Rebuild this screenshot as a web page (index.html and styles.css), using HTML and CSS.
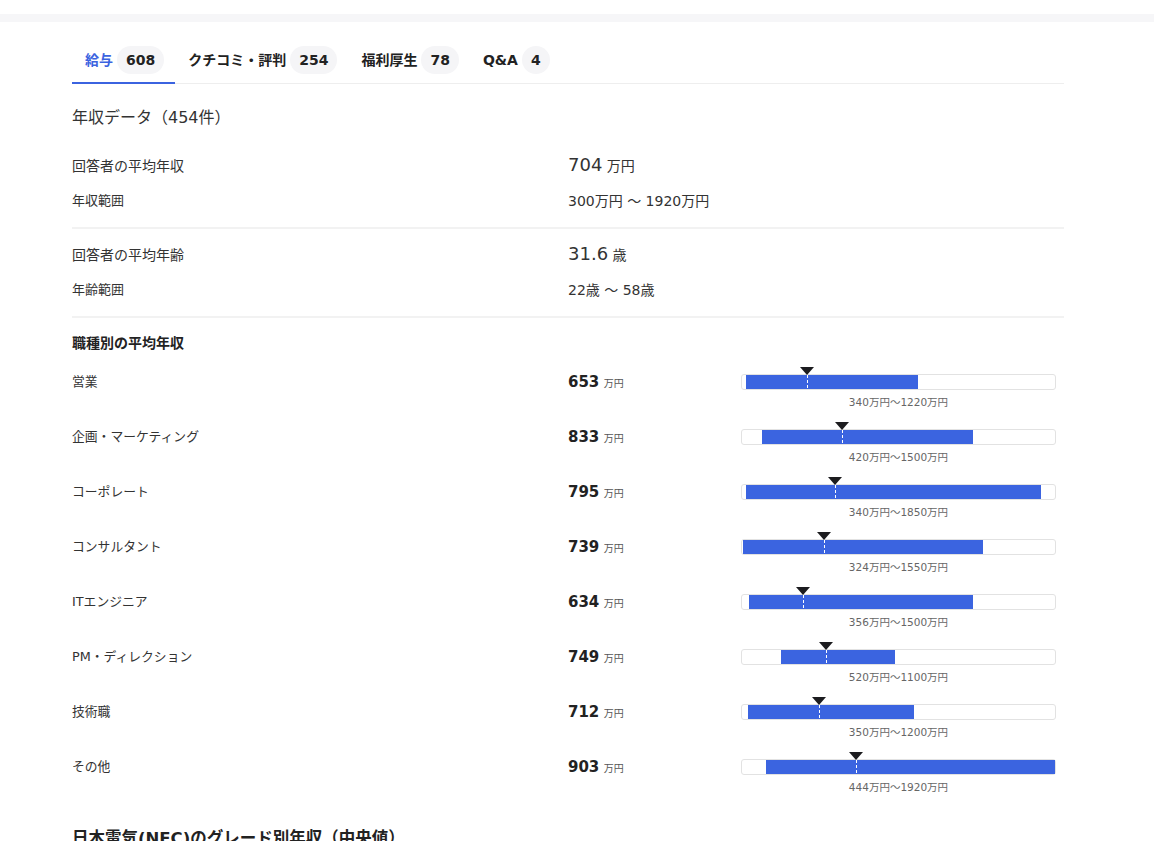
FILE: index.html
```html
<!DOCTYPE html>
<html lang="ja">
<head>
<meta charset="utf-8">
<title>年収データ</title>
<link rel="stylesheet" href="styles.css">
</head>
<body>
<div class="topband"></div>
<main class="content">
  <nav class="tabs">
    <a class="tab active"><span class="tab-label">給与</span><span class="badge">608</span></a>
    <a class="tab"><span class="tab-label">クチコミ・評判</span><span class="badge">254</span></a>
    <a class="tab"><span class="tab-label">福利厚生</span><span class="badge">78</span></a>
    <a class="tab"><span class="tab-label">Q&amp;A</span><span class="badge">4</span></a>
  </nav>

  <h2 class="section-title">年収データ（454件）</h2>

  <div class="stat-block first">
    <div class="stat-row main"><span class="stat-label">回答者の平均年収</span><span class="stat-value"><span class="num">704</span> <span class="unit">万円</span></span></div>
    <div class="stat-row sub"><span class="stat-label">年収範囲</span><span class="stat-value">300万円 〜 1920万円</span></div>
  </div>
  <div class="stat-block">
    <div class="stat-row main"><span class="stat-label">回答者の平均年齢</span><span class="stat-value"><span class="num">31.6</span> <span class="unit">歳</span></span></div>
    <div class="stat-row sub"><span class="stat-label">年齢範囲</span><span class="stat-value">22歳 〜 58歳</span></div>
  </div>

  <section class="jobs">
    <h3 class="jobs-title">職種別の平均年収</h3>

    <div class="job-row">
      <span class="job-label">営業</span>
      <span class="job-value"><b>653</b> <small>万円</small></span>
      <div class="job-chart">
        <div class="bar"><div class="fill" style="left:1.25%;width:55%"></div><div class="marker" style="left:20.8125%"></div></div>
        <div class="range">340万円〜1220万円</div>
      </div>
    </div>

    <div class="job-row">
      <span class="job-label">企画・マーケティング</span>
      <span class="job-value"><b>833</b> <small>万円</small></span>
      <div class="job-chart">
        <div class="bar"><div class="fill" style="left:6.25%;width:67.5%"></div><div class="marker" style="left:32.0625%"></div></div>
        <div class="range">420万円〜1500万円</div>
      </div>
    </div>

    <div class="job-row">
      <span class="job-label">コーポレート</span>
      <span class="job-value"><b>795</b> <small>万円</small></span>
      <div class="job-chart">
        <div class="bar"><div class="fill" style="left:1.25%;width:94.375%"></div><div class="marker" style="left:29.6875%"></div></div>
        <div class="range">340万円〜1850万円</div>
      </div>
    </div>

    <div class="job-row">
      <span class="job-label">コンサルタント</span>
      <span class="job-value"><b>739</b> <small>万円</small></span>
      <div class="job-chart">
        <div class="bar"><div class="fill" style="left:0.25%;width:76.625%"></div><div class="marker" style="left:26.1875%"></div></div>
        <div class="range">324万円〜1550万円</div>
      </div>
    </div>

    <div class="job-row">
      <span class="job-label">ITエンジニア</span>
      <span class="job-value"><b>634</b> <small>万円</small></span>
      <div class="job-chart">
        <div class="bar"><div class="fill" style="left:2.25%;width:71.5%"></div><div class="marker" style="left:19.625%"></div></div>
        <div class="range">356万円〜1500万円</div>
      </div>
    </div>

    <div class="job-row">
      <span class="job-label">PM・ディレクション</span>
      <span class="job-value"><b>749</b> <small>万円</small></span>
      <div class="job-chart">
        <div class="bar"><div class="fill" style="left:12.5%;width:36.25%"></div><div class="marker" style="left:26.8125%"></div></div>
        <div class="range">520万円〜1100万円</div>
      </div>
    </div>

    <div class="job-row">
      <span class="job-label">技術職</span>
      <span class="job-value"><b>712</b> <small>万円</small></span>
      <div class="job-chart">
        <div class="bar"><div class="fill" style="left:1.875%;width:53.125%"></div><div class="marker" style="left:24.5%"></div></div>
        <div class="range">350万円〜1200万円</div>
      </div>
    </div>

    <div class="job-row">
      <span class="job-label">その他</span>
      <span class="job-value"><b>903</b> <small>万円</small></span>
      <div class="job-chart">
        <div class="bar"><div class="fill" style="left:7.75%;width:92.25%"></div><div class="marker" style="left:36.4375%"></div></div>
        <div class="range">444万円〜1920万円</div>
      </div>
    </div>
  </section>

  <h2 class="grade-title">日本電気(NEC)のグレード別年収（中央値）</h2>
</main>
</body>
</html>
```

FILE: styles.css
```css
* { box-sizing: border-box; }

html, body {
  margin: 0;
  padding: 0;
  background: #fff;
  height: 841px;
  overflow: hidden;
}

body {
  font-family: "DejaVu Sans", "Noto Sans CJK JP", sans-serif;
  color: #333;
  font-size: 14px;
  line-height: 20px;
}

.topband {
  margin-top: 14px;
  height: 8px;
  background: #f6f6f8;
}

.content {
  width: 992px;
  margin-left: 72px;
}

/* Tabs */
.tabs {
  display: flex;
  padding-top: 24px;
  border-bottom: 1px solid #eeeeee;
}

.tab {
  display: flex;
  align-items: center;
  gap: 4px;
  padding: 0 11px 8px 13px;
  border-bottom: 2px solid transparent;
  margin-bottom: -1px;
  font-size: 14px;
  line-height: 20px;
  font-weight: 700;
  color: #222;
  text-decoration: none;
}

.tab.active {
  border-bottom-color: #3b63e0;
}

.tab.active .tab-label {
  color: #3b63e0;
}

.badge {
  display: inline-flex;
  align-items: center;
  justify-content: center;
  height: 28px;
  min-width: 26px;
  padding: 0 9px;
  border-radius: 14px;
  background: #f5f5f7;
  color: #222;
  font-weight: 700;
  font-size: 14px;
}

/* Summary */
.section-title {
  margin: 22px 0 0;
  font-size: 16px;
  line-height: 24px;
  font-weight: 400;
  color: #333;
}

.stat-block {
  display: flex;
  flex-direction: column;
  gap: 16px;
  padding: 15px 0 16px;
  border-bottom: 2px solid #f2f2f2;
}

.stat-block.first {
  padding-top: 25px;
}

.stat-row {
  display: grid;
  grid-template-columns: 496px 1fr;
  align-items: center;
  height: 20px;
  line-height: 20px;
}

.stat-row.main .stat-label {
  font-size: 14px;
}

.stat-row.sub .stat-label {
  font-size: 13px;
}

.stat-row.sub .stat-value {
  font-size: 14px;
}

.stat-value .num {
  font-size: 18px;
}

.stat-value .unit {
  font-size: 14px;
}

/* Job breakdown */
.jobs {
  display: flex;
  flex-direction: column;
  gap: 20px;
  padding-top: 15px;
}

.jobs-title {
  margin: 0 0 1px;
  font-size: 14px;
  line-height: 20px;
  font-weight: 700;
  color: #222;
}

.job-row {
  display: grid;
  grid-template-columns: 496px 173px 315px;
  align-items: start;
  height: 35px;
  line-height: 16px;
}

.job-label {
  font-size: 12.8px;
  line-height: 16px;
  color: #333;
}

.job-value {
  line-height: 16px;
  color: #222;
}

.job-value b {
  font-size: 15px;
  font-weight: 700;
}

.job-value small {
  font-size: 10px;
  color: #555;
}

.bar {
  position: relative;
  height: 16px;
  border: 1px solid #e2e2e2;
  border-radius: 3px;
  background: #fff;
}

.fill {
  position: absolute;
  top: 0;
  bottom: 0;
  background: #3b64e0;
}

.marker {
  position: absolute;
  top: 0;
  bottom: 0;
  width: 1px;
  background: repeating-linear-gradient(to bottom, #ffffff 0 3px, transparent 3px 5px);
}

.marker::before {
  content: "";
  position: absolute;
  top: -8px;
  left: -7px;
  border-left: 7.5px solid transparent;
  border-right: 7.5px solid transparent;
  border-top: 8px solid #1c1c1f;
}

.range {
  height: 14px;
  margin-top: 5px;
  text-align: center;
  font-size: 10.5px;
  line-height: 14px;
  color: #666;
}

.grade-title {
  margin: 33px 0 0;
  font-size: 16.5px;
  line-height: 24px;
  font-weight: 700;
  color: #222;
  white-space: nowrap;
}
```
